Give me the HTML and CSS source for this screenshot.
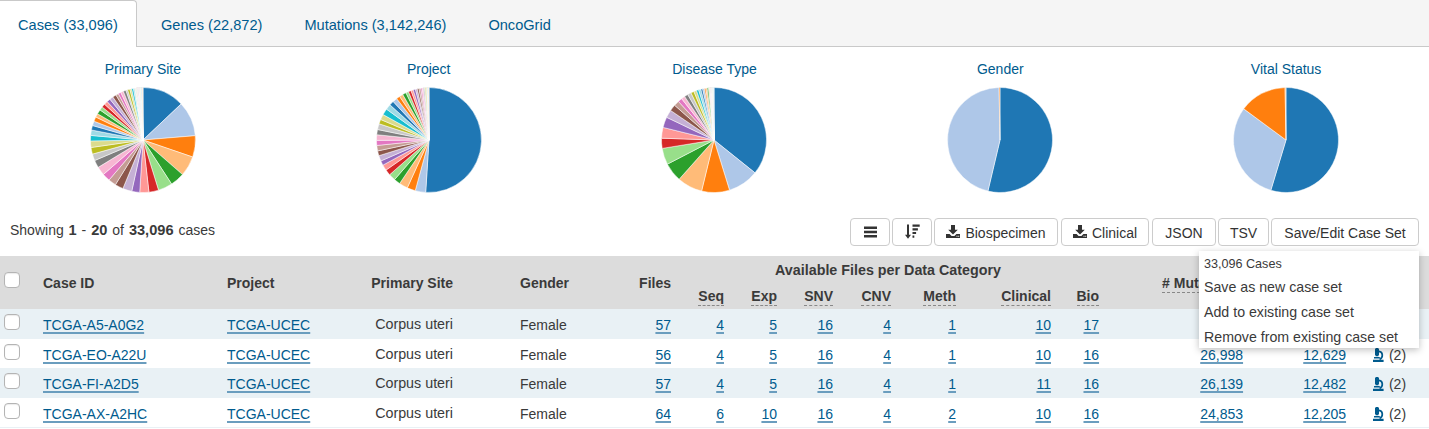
FILE: index.html
```html
<!DOCTYPE html>
<html lang="en">
<head>
    <meta charset="UTF-8">
    <meta name="viewport" content="width=device-width, initial-scale=1.0">
    <title>Exploration</title>
    <link rel="stylesheet" href="styles.css">
</head>
<body>
    <ul class="tabs">
        <li class="tab active">Cases (33,096)</li>
        <li class="tab">Genes (22,872)</li>
        <li class="tab">Mutations (3,142,246)</li>
        <li class="tab">OncoGrid</li>
    </ul>

    <div class="charts">
        <div class="chart"><div class="chart-title">Primary Site</div><svg class="pie" id="pieSite" viewBox="-53 -53 106 106"></svg></div>
        <div class="chart"><div class="chart-title">Project</div><svg class="pie" id="pieProject" viewBox="-53 -53 106 106"></svg></div>
        <div class="chart"><div class="chart-title">Disease Type</div><svg class="pie" id="pieDisease" viewBox="-53 -53 106 106"></svg></div>
        <div class="chart"><div class="chart-title">Gender</div><svg class="pie" id="pieGender" viewBox="-53 -53 106 106"></svg></div>
        <div class="chart"><div class="chart-title">Vital Status</div><svg class="pie" id="pieVital" viewBox="-53 -53 106 106"></svg></div>
    </div>

    <div class="toolbar">
        <div class="showing">Showing <b>1</b> - <b>20</b> of <b>33,096</b> cases</div>
        <div class="buttons">
            <button class="btn btn-icon"><svg class="icon icon-bars" width="13" height="12" viewBox="0 0 13 12"><path d="M0 .6h13v2.400H0zM0 4.800h13v2.400H0zM0 9h13v2.400H0z"/></svg></button>
            <button class="btn btn-icon"><svg class="icon" width="15" height="15" viewBox="0 0 15 15"><path d="M2 .5h2v10.200h2L3 14.700 0 10.700h2zM7.500 .5h7.200v2.200H7.500zM7.500 4.200h5.400v2.200H7.500zM7.500 7.900h3.600v2.200H7.500zM7.500 11.600h1.800v2.200H7.500z"/></svg></button>
            <button class="btn btn-bio"><svg class="icon" width="14" height="13" viewBox="0 0 14 13"><path fill-rule="evenodd" d="M5 0h4v4.800h2.800L7 9.400 2.200 4.800H5zM0 9h3.600l2 1.900h2.800l2-1.900H14v4H0zM10.500 10.800v1h1v-1zM12.200 10.800v1h1v-1z"/></svg> Biospecimen</button>
            <button class="btn btn-clinical"><svg class="icon" width="14" height="13" viewBox="0 0 14 13"><path fill-rule="evenodd" d="M5 0h4v4.800h2.800L7 9.400 2.200 4.800H5zM0 9h3.600l2 1.900h2.800l2-1.900H14v4H0zM10.500 10.800v1h1v-1zM12.200 10.800v1h1v-1z"/></svg> Clinical</button>
            <button class="btn btn-json">JSON</button>
            <button class="btn btn-tsv">TSV</button>
            <div class="dropdown">
                <button class="btn btn-save">Save/Edit Case Set</button>
                <div class="menu">
                    <div class="menu-head">33,096 Cases</div>
                    <div class="menu-item">Save as new case set</div>
                    <div class="menu-item">Add to existing case set</div>
                    <div class="menu-item">Remove from existing case set</div>
                </div>
            </div>
        </div>
    </div>

    <table class="cases">
        <colgroup>
            <col class="c-check"><col class="c-id"><col class="c-project"><col class="c-site"><col class="c-gender">
            <col class="c-files"><col class="c-seq"><col class="c-exp"><col class="c-snv"><col class="c-cnv">
            <col class="c-meth"><col class="c-clinical"><col class="c-bio"><col class="c-mut"><col class="c-genes"><col class="c-slides">
        </colgroup>
        <thead>
            <tr class="head-top">
                <th rowspan="2" class="cell-check"><input type="checkbox" class="check"></th>
                <th rowspan="2" class="left">Case ID</th>
                <th rowspan="2" class="left">Project</th>
                <th rowspan="2">Primary Site</th>
                <th rowspan="2" class="gender">Gender</th>
                <th rowspan="2">Files</th>
                <th colspan="7" class="center">Available Files per Data Category</th>
                <th rowspan="2" class="mut-head"><span class="hint">#&nbsp;Mutations</span></th>
                <th rowspan="2"></th>
                <th rowspan="2"></th>
            </tr>
            <tr class="head-sub">
                <th><span class="hint">Seq</span></th>
                <th><span class="hint">Exp</span></th>
                <th><span class="hint">SNV</span></th>
                <th><span class="hint">CNV</span></th>
                <th><span class="hint">Meth</span></th>
                <th><span class="hint">Clinical</span></th>
                <th><span class="hint">Bio</span></th>
            </tr>
        </thead>
        <tbody id="rows"></tbody>
    </table>

    <script src="main.js"></script>
</body>
</html>
```
FILE: styles.css
```css
html, body {
    margin: 0;
    padding: 0;
}
body {
    font-family: "Liberation Sans", Arial, sans-serif;
    font-size: 14px;
    color: #3a3a3a;
    background: #fff;
}

/* tabs */
.tabs {
    display: flex;
    list-style: none;
    margin: 0;
    padding: 0;
    height: 46px;
    background: #f5f5f5;
    border-bottom: 1px solid #c9c9c9;
    font-size: 14.6px;
}
.tab {
    padding: 0 18px 0 24px;
    line-height: 50px;
    height: 47px;
    box-sizing: border-box;
    color: #005b8e;
}
.tab.active {
    width: 137px;
    padding: 0 0 0 18px;
    background: #fff;
    border: 1px solid #c9c9c9;
    border-width: 1px 1px 0 0;
    border-radius: 0 4px 0 0;
    line-height: 49px;
}

/* pie charts */
.charts {
    display: grid;
    grid-template-columns: repeat(5, 1fr);
    padding-top: 13px;
}
.chart {
    display: flex;
    flex-direction: column;
    align-items: center;
}
.chart-title {
    color: #005b8e;
    line-height: 18px;
}
.pie {
    width: 106px;
    height: 106px;
    margin-top: 9px;
}
.pie path {
    stroke: #fff;
    stroke-width: 0.5;
}

/* toolbar */
.toolbar {
    display: flex;
    justify-content: space-between;
    align-items: flex-start;
    margin-top: 25px;
    padding: 0 10px;
}
.showing {
    line-height: 24px;
    word-spacing: 1px;
}
.showing b {
    font-size: 14.6px;
}
.buttons {
    display: flex;
    gap: 2px;
}
.btn {
    display: flex;
    align-items: center;
    justify-content: center;
    gap: 5px;
    height: 28px;
    padding: 1px 0 0;
    font: inherit;
    color: #333;
    background: #fff;
    border: 1px solid #ccc;
    border-radius: 4px;
}
.btn-icon { width: 40px; }
.btn-bio { width: 124px; }
.btn-clinical {
    width: 88px;
    margin: 0 1px;
}
.btn-json { width: 64px; }
.btn-tsv { width: 51px; }
.btn-save { width: 148px; }
.icon {
    fill: #333;
    margin-top: -2px;
}
.icon-bars {
    margin-top: -1px;
}
.dropdown {
    position: relative;
}
.menu {
    position: absolute;
    top: 33px;
    right: 0;
    z-index: 2;
    width: 220px;
    height: 97px;
    box-sizing: border-box;
    padding: 3px 5px 0;
    background: #fff;
    box-shadow: 0 2px 7px rgba(0, 0, 0, 0.25);
}
.menu-head {
    font-size: 12.6px;
    line-height: 21px;
}
.menu-item {
    font-size: 14.2px;
    line-height: 25px;
}

/* table */
.cases {
    width: 100%;
    margin-top: 10px;
    border-collapse: collapse;
    table-layout: fixed;
}
.c-check { width: 33px; }
.c-id { width: 184px; }
.c-project { width: 135px; }
.c-site { width: 101px; }
.c-gender { width: 97px; }
.c-files { width: 121px; }
.c-seq { width: 53px; }
.c-exp { width: 53px; }
.c-snv { width: 56px; }
.c-cnv { width: 58px; }
.c-meth { width: 65px; }
.c-clinical { width: 95px; }
.c-bio { width: 48px; }
.c-mut { width: 144px; }
.c-genes { width: 103px; }
th, td {
    padding: 0 0 0 10px;
    text-align: right;
    white-space: nowrap;
}
td {
    padding-top: 8px;
    vertical-align: top;
}
th.cell-check, td.cell-check {
    padding: 0 0 0 4px;
    text-align: left;
}
td.cell-check {
    padding-top: 5px;
}
th.cell-check .check {
    margin-bottom: 5px;
}
td.site {
    padding-top: 7px;
    font-size: 14.3px;
}
th {
    font-weight: bold;
    background: #dcdcdc;
}
.head-top { height: 27px; }
.head-sub { height: 26px; }
.head-top th { vertical-align: middle; }
.head-top th.center {
    padding-left: 6px;
    font-size: 14.3px;
    text-align: center;
}
th.left, td.left { text-align: left; }
th.gender, td.gender {
    padding-left: 67px;
    text-align: left;
}
th.mut-head {
    padding-left: 63px;
    text-align: left;
}
.hint {
    padding-bottom: 1px;
    border-bottom: 1px dashed #888;
}
tbody tr { height: 29px; }
tbody tr:nth-child(odd) {
    height: 30px;
    background: #e9f1f5;
}
tbody tr.peek { height: 1px; }
tbody tr.peek td { padding: 0; line-height: 0; }
a {
    color: #005b8e;
    text-decoration: underline;
    text-decoration-color: #6a9dbe;
    text-decoration-thickness: 2px;
    text-underline-offset: 2px;
}
.check {
    appearance: none;
    display: block;
    width: 16px;
    height: 16px;
    margin: 0;
    background: #fff;
    border: 1px solid #b4b4b4;
    border-radius: 4px;
    box-shadow: inset 0 1px 1px rgba(0, 0, 0, 0.08);
}
td.slides {
    text-align: left;
    padding-left: 27px;
}
.slides a {
    text-decoration: none;
}
.slides svg {
    margin-right: 1px;
    vertical-align: -2px;
    fill: #005b8e;
}
.slides .arm {
    fill: none;
    stroke: #005b8e;
    stroke-width: 1.7;
}
```
FILE: main.js
```js
// tableau 20, d3.scale.category20
const palette = ['#1f77b4', '#aec7e8', '#ff7f0e', '#ffbb78', '#2ca02c', '#98df8a', '#d62728', '#ff9896', '#9467bd', '#c5b0d5',
    '#8c564b', '#c49c94', '#e377c2', '#f7b6d2', '#7f7f7f', '#c7c7c7', '#bcbd22', '#dbdb8d', '#17becf', '#9edae5'];

// hair thin slices at the end of a pie, they mostly show as the white stroke
function tail(from, count) {
    const out = [];
    for (let i = 1; i <= count; i++) out.push(from + (360 - from) * i / count);
    return out;
}

// slice end angles, clockwise from 12 o'clock
const pies = {
    pieSite: [46.6, 85.3, 108.9, 131.2, 147, 162.8, 173.5, 183.6, 192.4, 202.5, 211.7, 220.3, 229, 238.6, 247, 254.4, 261.8, 269, 275, 281,
        286, 291, 296, 300, 305, 309, 313, 317, 321, 325, 329, 332, 335, 338, 341, 343, 345.5, 347.5, 349.5, 351].concat(tail(351, 24)),
    pieProject: [183.6, 195.2, 204.4, 214, 221, 228.6, 235, 241.4, 246.5, 252.6, 258, 264, 269.6, 275.8, 281.5, 288, 293, 299, 306, 312,
        317, 322, 326, 330, 334, 337, 340, 342.5, 345, 347, 349, 351, 352.5, 354, 355, 356, 357, 358].concat(tail(358, 6)),
    pieDisease: [128.7, 162.8, 193.7, 221.6, 242.6, 260.8, 272, 283.9, 295.6, 304.3, 311.4, 317.3, 322, 326, 330, 334, 337.5, 340.5, 343, 345.5,
        347.5, 349.5, 351, 352.5, 354, 355].concat(tail(355, 16)),
    pieGender: [193.3, 359, 360],
    pieVital: [196.8, 306.4, 359, 360]
};

const R = 52.5;

function point(deg) {
    const rad = deg * Math.PI / 180;
    return (R * Math.sin(rad)).toFixed(2) + ' ' + (-R * Math.cos(rad)).toFixed(2);
}

Object.keys(pies).forEach(id => {
    let start = 0;
    let html = '';
    pies[id].forEach((end, i) => {
        const large = end - start > 180 ? 1 : 0;
        html += `<path fill="${palette[i % 20]}" d="M0 0L${point(start)}A${R} ${R} 0 ${large} 1 ${point(end)}Z"/>`;
        start = end;
    });
    document.getElementById(id).innerHTML = html;
});

// row 1 numbers sit behind the open menu
const rows = [
    ['TCGA-A5-A0G2', 57, 4, 5, 16, 4, 1, 10, 17, '', '', ''],
    ['TCGA-EO-A22U', 56, 4, 5, 16, 4, 1, 10, 16, '26,998', '12,629', 2],
    ['TCGA-FI-A2D5', 57, 4, 5, 16, 4, 1, 11, 16, '26,139', '12,482', 2],
    ['TCGA-AX-A2HC', 64, 6, 10, 16, 4, 2, 10, 16, '24,853', '12,205', 2]
];

const microscope = '<svg width="11" height="14" viewBox="0 0 11 14"><path d="M2.500 0h3v1h.5v6.200H5.400v1H2.600v-1H2V1h.5zM1 9h5.800v1.400H1zM0 11.700h10.600V14H0z"/><path class="arm" d="M6 3.400c4 .4 4.600 6 .6 8.100"/></svg>';

const link = v => v === '' ? '' : `<a href="#">${v}</a>`;

let body = '';
rows.forEach(r => {
    body += '<tr><td class="cell-check"><input type="checkbox" class="check"></td>';
    body += `<td class="left">${link(r[0])}</td><td class="left">${link('TCGA-UCEC')}</td><td class="site">Corpus uteri</td><td class="gender">Female</td>`;
    for (let i = 1; i <= 10; i++) body += `<td>${link(r[i])}</td>`;
    body += r[11] === '' ? '<td></td>' : `<td class="slides"><a href="#">${microscope}</a> (${r[11]})</td>`;
    body += '</tr>';
});
body += '<tr class="peek"><td colspan="16"></td></tr>';
document.getElementById('rows').innerHTML = body;
```
